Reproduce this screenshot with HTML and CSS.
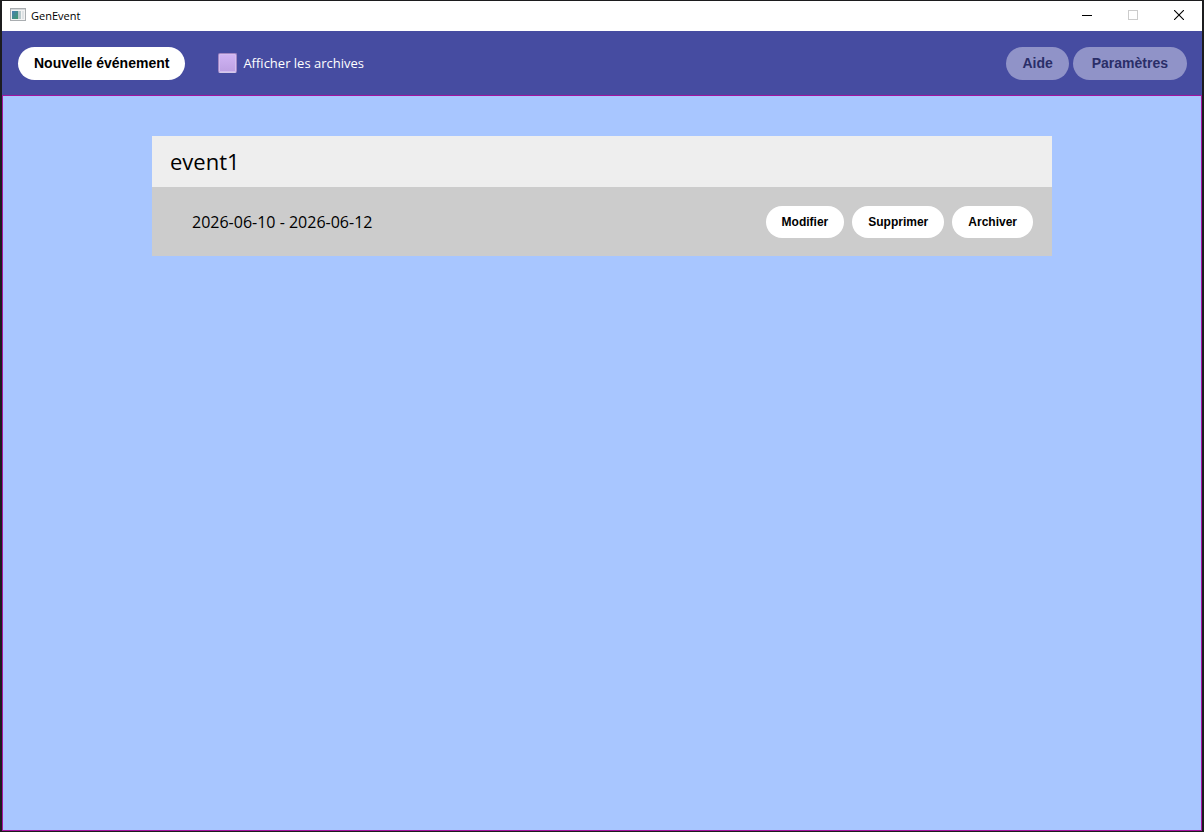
FILE: index.html
```html
<!DOCTYPE html>
<html lang="fr">
  <head>
    <meta charset="UTF-8">
    <meta name="viewport" content="width=device-width, initial-scale=1.0">
    <title>GenEvent</title>
    <link rel="stylesheet" href="styles.css">
  </head>
  <body>
    <div class="window">
      <header class="titlebar">
        <svg class="app-icon" width="16" height="14" viewBox="0 0 16 14" aria-hidden="true">
          <defs>
            <linearGradient id="screen" x1="0" y1="0" x2="1" y2="1">
              <stop offset="0" stop-color="#4a7fb5"/>
              <stop offset="1" stop-color="#3f9a6c"/>
            </linearGradient>
          </defs>
          <rect x="0.5" y="0.5" width="15" height="12" fill="#f4f4f4" stroke="#a9adb0"/>
          <rect x="1" y="1" width="14" height="1" fill="#d5d8da"/>
          <rect x="2" y="3" width="6" height="8" fill="url(#screen)"/>
          <rect x="8" y="3" width="3" height="8" fill="#b9c9cc"/>
          <rect x="12" y="3" width="2" height="8" fill="#dfe3e5"/>
        </svg>
        <span class="app-name">GenEvent</span>
        <div class="window-controls">
          <button class="window-btn" aria-label="Réduire">
            <svg width="10" height="10" viewBox="0 0 10 10"><path d="M0 5.500H10" stroke="#000"/></svg>
          </button>
          <button class="window-btn" aria-label="Agrandir" disabled>
            <svg width="10" height="10" viewBox="0 0 10 10"><rect x="0.500" y="0.500" width="9" height="9" fill="none" stroke="#ccc"/></svg>
          </button>
          <button class="window-btn" aria-label="Fermer">
            <svg width="10" height="10" viewBox="0 0 10 10"><path d="M0 0L10 10M10 0L0 10" stroke="#000" stroke-width="1.100"/></svg>
          </button>
        </div>
      </header>

      <nav class="toolbar">
        <button class="btn">Nouvelle événement</button>
        <label class="archives">
          <input type="checkbox" class="archives-check">
          Afficher les archives
        </label>
        <div class="toolbar-right">
          <button class="btn" disabled>Aide</button>
          <button class="btn btn-wide" disabled>Paramètres</button>
        </div>
      </nav>

      <main class="content">
        <section class="event">
          <h2 class="event-title">event1</h2>
          <div class="event-body">
            <span class="event-dates">2026-06-10 - 2026-06-12</span>
            <div class="event-actions">
              <button class="btn btn-small">Modifier</button>
              <button class="btn btn-small">Supprimer</button>
              <button class="btn btn-small">Archiver</button>
            </div>
          </div>
        </section>
      </main>
    </div>
  </body>
</html>
```

FILE: styles.css
```css
* {
  box-sizing: border-box;
}
body {
  margin: 0;
  padding: 1px 2px;
  height: 100vh;
  background-color: #1c1c1e;
  font-family: "Open Sans", "Noto Sans", sans-serif;
  color: #000;
}
.window {
  height: 100%;
  display: flex;
  flex-direction: column;
}
.titlebar {
  height: 30px;
  display: flex;
  align-items: center;
  padding: 0 0 2px 8px;
  background-color: #fff;
}
.app-name {
  margin-left: 5px;
  font-size: 11px;
}
.window-controls {
  display: flex;
  height: 100%;
  margin-left: auto;
}
.window-btn {
  width: 46px;
  padding: 0;
  border: none;
  background: none;
  display: flex;
  align-items: center;
  justify-content: center;
}
.toolbar {
  display: flex;
  align-items: center;
  height: 64px;
  padding: 0 15px 0 16px;
  background-color: #464ca1;
}
.btn {
  height: 33px;
  padding: 0 16px;
  border: none;
  border-radius: 17px;
  background-color: #fff;
  color: #000;
  font-family: "Liberation Sans", Arial, sans-serif;
  font-size: 14px;
  font-weight: bold;
  cursor: pointer;
}
.btn:disabled {
  background-color: #9093c8;
  color: #2a2e68;
  cursor: default;
}
.btn-wide {
  padding: 0 19px;
}
.btn-small {
  height: 32px;
  font-size: 12px;
}
.archives {
  display: flex;
  align-items: center;
  gap: 6px;
  margin-left: 33px;
  color: #fff;
  font-size: 13px;
}
.archives-check {
  appearance: none;
  width: 19px;
  height: 20px;
  margin: 0;
  border: 1px solid #a287c4;
  border-bottom-color: #d5c9e8;
  border-radius: 2px;
  background-image: linear-gradient(#d0b4f4, #bda0e2);
  box-shadow: inset 0 0 0 1px #d3bdf0;
}
.archives-check:checked {
  background-image: linear-gradient(#7a55b0, #6a46a0);
}
.toolbar-right {
  display: flex;
  gap: 4px;
  margin-left: auto;
}
.content {
  flex: 1;
  padding: 40px 149px;
  border: 1px solid #a3159f;
  background-color: #a8c6ff;
}
.event-title {
  margin: 0;
  padding: 0 18px;
  background-color: #eee;
  font-size: 22px;
  font-weight: normal;
  line-height: 51px;
}
.event-body {
  display: flex;
  align-items: center;
  justify-content: space-between;
  height: 69px;
  padding: 0 19px 0 40px;
  background-color: #ccc;
}
.event-dates {
  font-size: 16px;
}
.event-actions {
  display: flex;
  gap: 8px;
}
```
